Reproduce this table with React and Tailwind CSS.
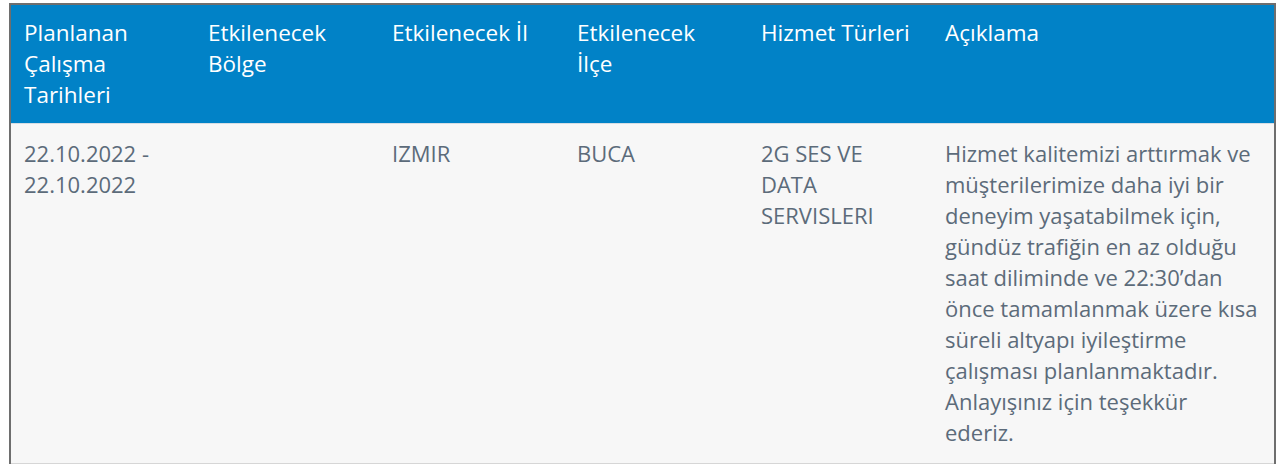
export default function App() {
  const headers = [
    ["Planlanan", "Çalışma", "Tarihleri"],
    ["Etkilenecek", "Bölge"],
    ["Etkilenecek İl"],
    ["Etkilenecek", "İlçe"],
    ["Hizmet Türleri"],
    ["Açıklama"],
  ];
  const cells = [
    ["22.10.2022 -", "22.10.2022"],
    [],
    ["IZMIR"],
    ["BUCA"],
    ["2G SES VE", "DATA", "SERVISLERI"],
    [
      "Hizmet kalitemizi arttırmak ve",
      "müşterilerimize daha iyi bir",
      "deneyim yaşatabilmek için,",
      "gündüz trafiğin en az olduğu",
      "saat diliminde ve 22:30’dan",
      "önce tamamlanmak üzere kısa",
      "süreli altyapı iyileştirme",
      "çalışması planlanmaktadır.",
      "Anlayışınız için teşekkür",
      "ederiz.",
    ],
  ];
  const widths = ["w-[184px]", "w-[184px]", "w-[185px]", "w-[184px]", "w-[184px]", ""];
  return (
    <div className="w-[1280px] h-[470px] bg-white pt-[3px] pl-[9px]" style={{ fontFamily: '"Open Sans", "Noto Sans", sans-serif' }}>
      <div className="w-[1267px] border-2 border-b-0 border-[#6e6e6e] h-[461px] overflow-hidden">
        <div className="flex bg-[#0182c7] h-[119px] border-b border-[#d6dde3]">
          {headers.map((h, i) => (
            <div key={i} className={`${widths[i]} ${i === 5 ? "flex-1" : "shrink-0"} pl-[13px] pr-[4px] pt-[12px] text-[22.5px] leading-[31px] text-white font-medium`}>
              {h.map((l, j) => (
                <span key={j} className="block whitespace-nowrap">{l}</span>
              ))}
            </div>
          ))}
        </div>
        <div className="flex bg-[#f7f7f7] h-[340px] border-b border-[#d6d6d6]">
          {cells.map((c, i) => (
            <div key={i} className={`${widths[i]} ${i === 5 ? "flex-1" : "shrink-0"} pl-[13px] pr-[4px] pt-[14px] text-[22px] leading-[31px] text-[#5c6b7a]`}>
              {c.map((l, j) => (
                <span key={j} className="block whitespace-nowrap">{l}</span>
              ))}
            </div>
          ))}
        </div>
      </div>
    </div>
  );
}
